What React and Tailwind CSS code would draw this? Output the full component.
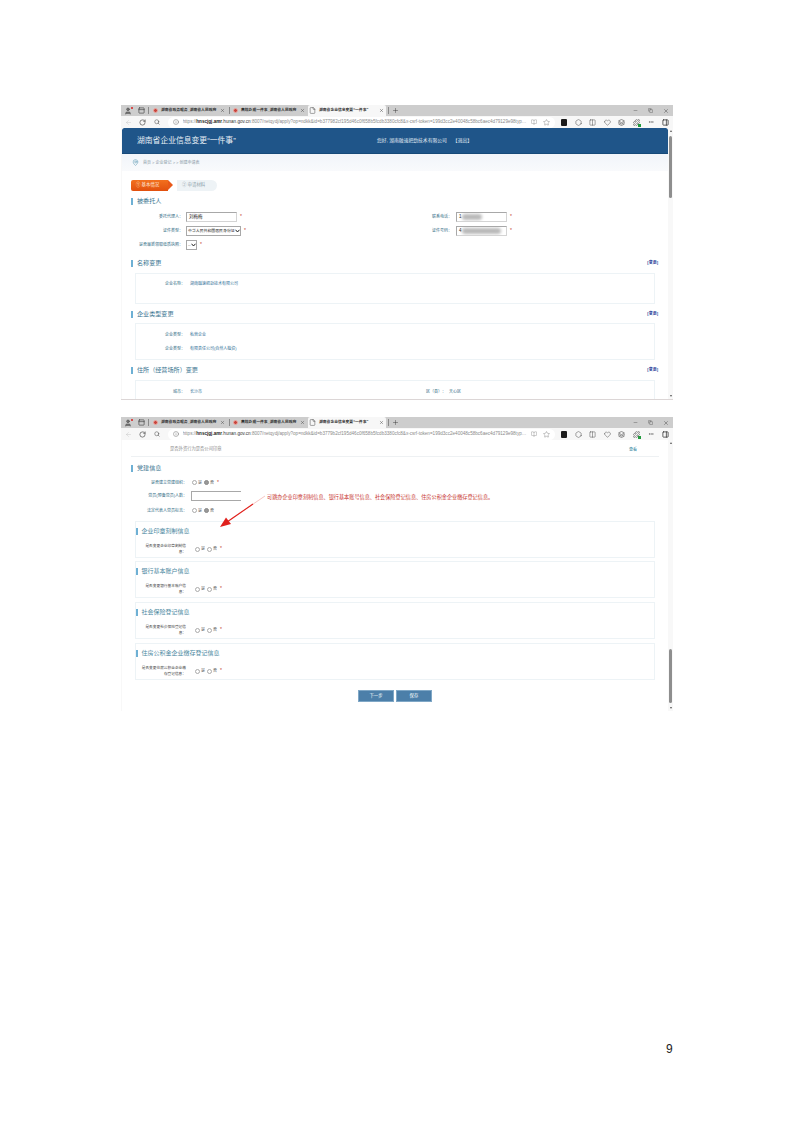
import React from 'react';
import {
  ArrowLeft, RotateCw, Search, Info, Star, Plus, X, Minus, Copy, File, User, PanelTop, Ellipsis,
  Columns2, Hexagon, Heart, Layers, Puzzle, PanelRight, BookOpen, MapPin,
} from 'lucide-react';

const URL_TAIL_1 = ':8007/netqydj/apply?op=ndkk&id=b377982cf195d46c0f658b5fcdb3380cfc8&x-csrf-token=199d3cc2e40048c58bc6aec4d79129e98type...';
const URL_TAIL_2 = ':8007/netqydj/apply?op=ndkk&id=b3779b2cf195d46c0f658b5fcdb3380cfc8&x-csrf-token=199d3cc2e40048c58bc6aec4d79129e98type...';

const Favicon = () => (
  <span className="w-[5px] h-[5px] rounded-full bg-[#c8443c] border border-[#e9a9a3] shrink-0" />
);

const Tab = ({ title, width, active }) => (
  <div
    className={`flex items-center h-[11px] pl-[1px] pr-[2px] gap-[3px] shrink-0 rounded-t-[2px] ${active ? 'bg-[#f7f7f7]' : ''}`}
    style={{ width }}
  >
    {active ? <File size={7} strokeWidth={1.5} className="text-[#333] shrink-0" /> : <Favicon />}
    <span className="flex-1 whitespace-nowrap text-[3.8px] text-[#333] font-bold">{title}</span>
    <X size={5} strokeWidth={2} className="text-[#444] shrink-0" />
  </div>
);

const TabBar = () => (
  <div className="flex items-center h-[11px] bg-[#cdcdcd]">
    <div className="relative w-[12px] ml-[1px] flex justify-center">
      <User size={8} strokeWidth={2} className="text-[#555]" fill="#777" />
      <span className="absolute top-0 right-[1px] w-[2px] h-[2px] rounded-full bg-[#d91f1f]" />
    </div>
    <div className="w-[14px] flex justify-center">
      <PanelTop size={7} strokeWidth={1.8} className="text-[#222]" />
    </div>
    <span className="w-px h-[7px] bg-[#8a8a8a] mr-[3px]" />
    <Tab title="湖南省政务服务_湖南省人民政府" width={75} />
    <span className="w-px h-[7px] bg-[#8a8a8a] mx-[2px]" />
    <Tab title="高效办成一件事_湖南省人民政府" width={75} />
    <span className="w-[1px]" />
    <Tab title="湖南省企业信息变更“一件事”" width={78} active />
    <span className="w-px h-[7px] bg-[#8a8a8a] mx-[2px]" />
    <Plus size={7} strokeWidth={1.5} className="text-[#333] ml-[1px]" />
    <div className="ml-auto flex items-center">
      <div className="w-[15px] flex justify-center"><Minus size={5} strokeWidth={1.8} className="text-[#444]" /></div>
      <div className="w-[15px] flex justify-center"><Copy size={5} strokeWidth={1.8} className="text-[#444]" /></div>
      <div className="w-[15px] flex justify-center"><X size={6} strokeWidth={1.8} className="text-[#444]" /></div>
    </div>
  </div>
);

const ToolCell = ({ children }) => (
  <div className="w-[14.5px] flex justify-center items-center shrink-0">{children}</div>
);

const AddressBar = ({ urlTail }) => (
  <div className="flex items-center h-[12px] bg-[#f7f7f7]">
    <ToolCell><ArrowLeft size={7} strokeWidth={1.5} className="text-[#c4c4c4]" /></ToolCell>
    <ToolCell><RotateCw size={7} strokeWidth={2} className="text-[#333]" /></ToolCell>
    <ToolCell><Search size={6} strokeWidth={2} className="text-[#444]" /></ToolCell>
    <div className="flex items-center h-[11px] w-[387px] ml-[3px] px-[5px] rounded-full bg-white shrink-0">
      <Info size={6} strokeWidth={1.6} className="text-[#555] shrink-0" />
      <span className="ml-[4px] flex-1 truncate text-[4.6px] text-[#8a8a8a]">
        https://<b className="text-[#222]">hnscjgj.amr</b><span className="text-[#333]">.hunan.gov.cn</span>{urlTail}
      </span>
      <BookOpen size={6} strokeWidth={1.4} className="text-[#777] ml-[3px] shrink-0" />
      <Star size={7} strokeWidth={1.3} className="text-[#666] ml-[6px] shrink-0" />
    </div>
    <div className="w-[2px]" />
    <ToolCell><span className="block w-[6px] h-[7px] rounded-[1px] bg-[#1b1b1b]" /></ToolCell>
    <ToolCell><Hexagon size={7} strokeWidth={1.8} className="text-[#555]" /></ToolCell>
    <ToolCell><Columns2 size={7} strokeWidth={1.6} className="text-[#444]" /></ToolCell>
    <ToolCell><Heart size={7} strokeWidth={1.6} className="text-[#444]" /></ToolCell>
    <ToolCell><Layers size={7} strokeWidth={2} className="text-[#444]" /></ToolCell>
    <ToolCell>
      <span className="relative flex">
        <Puzzle size={7} strokeWidth={2} className="text-[#444]" />
        <span className="absolute -right-[1px] -bottom-[1px] w-[3px] h-[3px] bg-[#1f9a3c]" />
      </span>
    </ToolCell>
    <ToolCell><Ellipsis size={6} strokeWidth={2} className="text-[#444]" /></ToolCell>
    <ToolCell><PanelRight size={7} strokeWidth={2.4} className="text-[#222]" /></ToolCell>
  </div>
);

const Scrollbar = ({ thumbTop, thumbHeight }) => (
  <div className="w-[5px] shrink-0 bg-[#f8f8f8] flex flex-col items-center">
    <span className="mt-[2px] w-0 h-0 border-x-[1.5px] border-x-transparent border-b-[2px] border-b-[#555]" />
    <span className="w-[3px] rounded-full bg-[#8e8e8e] shrink-0" style={{ marginTop: thumbTop, height: thumbHeight }} />
    <span className="mt-auto mb-[2px] w-0 h-0 border-x-[1.5px] border-x-transparent border-t-[2px] border-t-[#555]" />
  </div>
);

const SectionTitle = ({ title, link, className = '' }) => (
  <div className={`flex items-center h-[10px] pl-[9px] pr-[10px] ${className}`}>
    <span className="w-[2px] h-[7px] bg-[#6eb0d4]" />
    <span className="ml-[4px] text-[6.1px] leading-none text-[#3a7590]">{title}</span>
    {link && <span className="ml-auto text-[4px] font-bold text-[#2b3f9a]">[变更]</span>}
  </div>
);

const Label = ({ width, children }) => (
  <span className="text-right text-[4px] leading-[6px] text-[#2f6b84] shrink-0" style={{ width }}>{children}</span>
);

const Req = () => <span className="text-[5px] text-[#c0392b] ml-[3px]">*</span>;

const TextInput = ({ value, width = 51, children }) => (
  <div
    className="relative flex items-center h-[10px] px-[2px] bg-white border border-[#d4d4d4] border-t-[#a8a8a8] border-l-[#a8a8a8] text-[4.5px] text-[#222] overflow-hidden"
    style={{ width }}
  >
    {value}
    {children}
  </div>
);

const SelectBox = ({ value, width }) => (
  <div
    className="flex items-center h-[10px] pl-[1px] bg-white border border-[#a8a8a8] text-[3.9px] text-[#222] overflow-hidden"
    style={{ width }}
  >
    <span className="flex-1 whitespace-nowrap">{value}</span>
    <svg width="5" height="4" viewBox="0 0 10 8" className="shrink-0">
      <path d="M1 1.5 L5 6 L9 1.5" fill="none" stroke="#222" strokeWidth="2" />
    </svg>
  </div>
);

const Smudge = ({ className }) => <span className={`absolute rounded-full bg-[#b9b9b9] blur-[1.5px] ${className}`} />;

const InfoRow = ({ label, value, labelWidth = 49 }) => (
  <div className="flex items-center h-[6px]">
    <Label width={labelWidth}>{label}</Label>
    <span className="ml-[5px] text-[4px] text-[#2f6f96]">{value}</span>
  </div>
);

const Panel = ({ height, children, className = '' }) => (
  <div className={`mx-[13px] border border-[#edf3f6] bg-white ${className}`} style={{ height }}>
    {children}
  </div>
);

const FirstWindow = () => (
  <div className="flex flex-col h-[295px] border-b border-[#dcd6d6] bg-[#f8f8f8]">
    <TabBar />
    <AddressBar urlTail={URL_TAIL_1} />
    <div className="flex flex-1 min-h-0">
      <div className="w-[1px] shrink-0" />
      <div className="flex-1 min-w-0 overflow-hidden bg-white rounded-t-[2px]">
        <div className="h-[26px] flex items-center bg-[#1f5589] rounded-t-[2px] border-b border-[#174a79]">
          <span className="ml-[15px] w-[240px] text-[7.8px] text-[#e6eef5]">湖南省企业信息变更“一件事”</span>
          <span className="text-[4.8px] text-[#e3ecf4]">您好, 湖南融速把劲技术有限公司</span>
          <span className="ml-[6px] text-[4.8px] text-[#e3ecf4]">【退出】</span>
        </div>
        <div className="h-[17px] flex items-center pl-[10px] bg-gradient-to-b from-[#f1f5fa] to-[#f9fafc]">
          <MapPin size={7} strokeWidth={1.8} className="text-[#5e9bb5]" />
          <span className="ml-[4px] text-[4px] text-[#8a9aa6]">首页 &gt; 企业登记 &gt; &gt; 创建申请表</span>
        </div>

        <div className="flex items-center mt-[9px] ml-[9px] h-[11px]">
          <div
            className="relative flex items-center h-[11px] w-[37px] pl-[5px] rounded-l-[2px] bg-gradient-to-b from-[#f2701e] to-[#e2500e] text-[4.4px] text-[#ffe9dc]"
          >
            ① 基本情况
            <span className="absolute -right-[5px] top-0 w-0 h-0 border-y-[5.5px] border-y-transparent border-l-[5px] border-l-[#e8591a]" />
          </div>
          <div className="flex items-center h-[11px] w-[40px] ml-[9px] pl-[5px] rounded-r-full bg-[#eef3f6] text-[4.4px] text-[#8fa3ad]">
            ② 申请材料
          </div>
        </div>

        <SectionTitle title="被委托人" className="mt-[5px]" />

        <div className="grid grid-cols-[273px_1fr] mt-[6px]">
          <div className="flex items-center h-[10px]">
            <Label width={61}>委托代理人：</Label>
            <div className="ml-[3px]"><TextInput value="刘梅梅" /></div>
            <Req />
          </div>
          <div className="flex items-center h-[10px]">
            <Label width={57}>联系电话：</Label>
            <div className="ml-[4px]">
              <TextInput value="1">
                <Smudge className="left-[5px] top-[1px] w-[20px] h-[6px]" />
              </TextInput>
            </div>
            <Req />
          </div>
        </div>
        <div className="grid grid-cols-[273px_1fr] mt-[4px]">
          <div className="flex items-center h-[10px]">
            <Label width={61}>证件类型：</Label>
            <div className="ml-[3px]"><SelectBox value="中华人民共和国居民身份证" width={55} /></div>
            <Req />
          </div>
          <div className="flex items-center h-[10px]">
            <Label width={57}>证件号码：</Label>
            <div className="ml-[4px]">
              <TextInput value="4">
                <Smudge className="left-[5px] top-[1px] w-[39px] h-[6px]" />
              </TextInput>
            </div>
            <Req />
          </div>
        </div>
        <div className="flex items-center h-[10px] mt-[4px]">
          <Label width={61}>是否最新领取纸质执照：</Label>
          <div className="ml-[3px]"><SelectBox value="--" width={11} /></div>
          <Req />
        </div>

        <SectionTitle title="名称变更" link className="mt-[8px]" />
        <Panel height={31} className="mt-[5px]">
          <div className="mt-[7px]"><InfoRow label="企业名称：" value="湖南融速把劲技术有限公司" /></div>
        </Panel>

        <SectionTitle title="企业类型变更" link className="mt-[5px]" />
        <Panel height={37} className="mt-[4px]">
          <div className="mt-[8px]"><InfoRow label="企业类型：" value="私营企业" /></div>
          <div className="mt-[8px]"><InfoRow label="企业类型：" value="有限责任公司(自然人独资)" /></div>
        </Panel>

        <SectionTitle title="住所（经营场所）变更" link className="mt-[5px]" />
        <Panel height={40} className="mt-[5px]">
          <div className="mt-[8px] flex items-center">
            <InfoRow label="城市：" value="长沙市" />
            <span className="ml-[224px] text-[4px] text-[#2f6b84]">区（县）：</span>
            <span className="ml-[3px] text-[4px] text-[#2f6b84]">天心区</span>
          </div>
        </Panel>
      </div>
      <Scrollbar thumbTop={4} thumbHeight={62} />
    </div>
  </div>
);

const Radios = ({ picked, className = '' }) => (
  <span className={`flex items-center gap-[1px] text-[4px] text-[#555] ${className}`}>
    <span className="w-[5px] h-[5px] rounded-full border border-[#aaa] bg-white" />
    <span className="mr-[1px]">是</span>
    <span className={`w-[5px] h-[5px] rounded-full border ${picked ? 'bg-[#999] border-[#888]' : 'bg-white border-[#aaa]'}`} />
    <span>否</span>
  </span>
);

const ChangePanel = ({ title, label, marginTop, labelWidth = 41 }) => (
  <div className="mx-[13px] h-[37px] border border-[#edf3f6] bg-white" style={{ marginTop }}>
    <div className="flex items-center h-[10px] mt-[4px]">
      <span className="w-[1.5px] h-[7px] bg-[#6eb0d4]" />
      <span className="ml-[4px] text-[6px] leading-none text-[#4a87a0]">{title}</span>
    </div>
    <div className="flex items-center h-[12px] mt-[7px]">
      <span
        className="text-right text-[3.7px] leading-[6px] text-[#444] shrink-0"
        style={{ width: labelWidth, marginLeft: 50 - labelWidth }}
      >
        {label}
      </span>
      <Radios className="ml-[9px]" />
      <Req />
    </div>
  </div>
);

const SecondWindow = () => (
  <div className="flex flex-col h-[294px] bg-[#f8f8f8]">
    <TabBar />
    <AddressBar urlTail={URL_TAIL_2} />
    <div className="flex flex-1 min-h-0">
      <div className="w-[1px] shrink-0" />
      <div className="relative flex-1 min-w-0 overflow-hidden bg-white">
        <div className="flex items-center h-[17px] pt-[3px] mx-[9px] border-b border-[#eef1f3]">
          <span className="ml-[39px] text-[4.3px] text-[#888]">是否外资行为是否公司印章</span>
          <span className="ml-auto mr-[22px] text-[4px] text-[#2d7f9c]">查看</span>
        </div>

        <SectionTitle title="党建信息" className="mt-[6px]" />
        <div className="flex items-center h-[9px] mt-[5px]">
          <Label width={65}>是否建立党建组织：</Label>
          <Radios picked className="ml-[5px]" />
          <Req />
        </div>
        <div className="flex items-center h-[10px] mt-[4px]">
          <Label width={65}>党员(预备党员)人数：</Label>
          <div className="ml-[4px] w-[50px] h-[10px] bg-white border-y border-l border-[#a8a8a8]" />
        </div>
        <div className="flex items-center h-[9px] mt-[5px]">
          <Label width={65}>法定代表人党员标志：</Label>
          <Radios picked className="ml-[5px]" />
        </div>

        <ChangePanel title="企业印章刻制信息" label="是否变更企业印章刻制信息：" marginTop={6} />
        <ChangePanel title="银行基本账户信息" label="是否变更银行基本账户信息：" marginTop={3} />
        <ChangePanel title="社会保险登记信息" label="是否变更社会保险登记信息：" marginTop={4} />
        <ChangePanel title="住房公积金企业缴存登记信息" label="是否变更住房公积金企业缴存登记信息：" marginTop={4} labelWidth={45} />

        <div className="flex justify-center gap-[2px] mt-[10px]">
          <button className="w-[36px] h-[12px] bg-[#4c7fa9] border border-[#7fa7c6] text-[4.4px] text-white">下一步</button>
          <button className="w-[36px] h-[12px] bg-[#4c7fa9] border border-[#7fa7c6] text-[4.4px] text-white">保存</button>
        </div>

        {/* annotation drawn over the form */}
        <span className="absolute left-[145px] top-[54px] text-[5.15px] leading-[6px] whitespace-nowrap text-[#c8362f]">
          可跳办企业印章刻制信息、银行基本账号信息、社会保险登记信息、住房公积金企业缴存登记信息。
        </span>
        <svg className="absolute left-[95px] top-[52px]" width="50" height="38" viewBox="0 0 50 38">
          <path d="M48 4 L14 27" stroke="#ef8a84" strokeWidth="0.5" fill="none" />
          <path d="M36 12 L10 30" stroke="#e0201c" strokeWidth="1.1" fill="none" />
          <path d="M3 35 L9 25.5 L14 32 Z" fill="#e0201c" />
        </svg>
      </div>
      <Scrollbar thumbTop={205} thumbHeight={54} />
    </div>
  </div>
);

const App = () => (
  <div className="w-[793px] h-[1122px] bg-white font-['Liberation_Sans','Noto_Sans_CJK_SC',sans-serif] pt-[105px] pl-[121px] overflow-hidden">
    <div className="w-[552px]">
      <FirstWindow />
      <div className="h-[17px]" />
      <SecondWindow />
    </div>
    <div className="mt-[331px] ml-[545px] text-[12px] leading-[14px] text-[#222] font-['Liberation_Sans',sans-serif]">9</div>
  </div>
);

export default App;
